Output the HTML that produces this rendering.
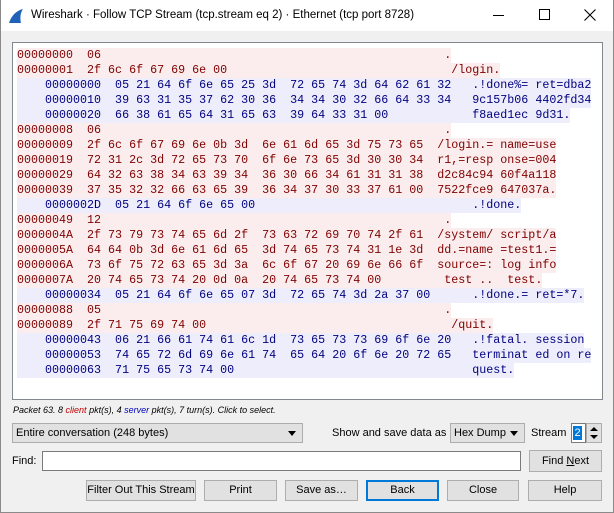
<!DOCTYPE html>
<html><head><meta charset="utf-8"><style>
*{margin:0;padding:0;box-sizing:border-box}
body{width:614px;height:513px;background:#f0f0f0;font-family:"Liberation Sans",sans-serif;font-size:11px;color:#000;position:relative;overflow:hidden;white-space:nowrap}
.frame{position:absolute;left:0;top:0;width:614px;height:513px;border:1px solid #8a8a8a;border-top:none}
.title{position:absolute;left:0;top:0;width:614px;height:31px;background:#fff}
.title .t{position:absolute;left:31px;top:9px;font-size:11.5px}
.ta{position:absolute;left:12px;top:42px;width:591px;height:358px;background:#fff;border:1px solid #828790}
.txt{position:absolute;left:4px;top:5px;font-family:"Liberation Mono",monospace;font-size:11.68px;line-height:15px;white-space:pre}
.c,.s{width:max-content}
.c{color:#7f0000;background:#fbeded}
.s{color:#00007f;background:#ededfb}
.abs{position:absolute}
.btn{position:absolute;height:21px;background:#e1e1e1;border:1px solid #adadad;text-align:center;line-height:19px}
.combo{position:absolute;background:#e1e1e1;border:1px solid #adadad;height:20px;line-height:18px;padding-left:3px}
.arr{position:absolute;right:6px;top:7px;width:0;height:0;border-left:4px solid transparent;border-right:4px solid transparent;border-top:5px solid #000}
</style></head><body>
<div class="title">
<svg class="abs" style="left:8px;top:8px" width="18" height="16" viewBox="0 0 18 16"><path d="M1 15 C3 9 7 3 15 1 C12 5 12 11 13 15 Z" fill="#1f62b8"/></svg>
<div class="t">Wireshark · Follow TCP Stream (tcp.stream eq 2) · Ethernet (tcp port 8728)</div>
<div class="abs" style="left:493px;top:15px;width:11px;height:1px;background:#000"></div>
<div class="abs" style="left:539px;top:9px;width:11px;height:11px;border:1px solid #000"></div>
<svg class="abs" style="left:584px;top:9px" width="12" height="12"><path d="M0.5 0.5L11.5 11.5M11.5 0.5L0.5 11.5" stroke="#000" stroke-width="1.1"/></svg>
</div>
<div class="frame"></div>
<div class="ta"><div class="txt"><div class="c">00000000  06                                                 .</div><div class="c">00000001  2f 6c 6f 67 69 6e 00                                /login.</div><div class="s">    00000000  05 21 64 6f 6e 65 25 3d  72 65 74 3d 64 62 61 32   .!done%= ret=dba2</div><div class="s">    00000010  39 63 31 35 37 62 30 36  34 34 30 32 66 64 33 34   9c157b06 4402fd34</div><div class="s">    00000020  66 38 61 65 64 31 65 63  39 64 33 31 00            f8aed1ec 9d31.</div><div class="c">00000008  06                                                 .</div><div class="c">00000009  2f 6c 6f 67 69 6e 0b 3d  6e 61 6d 65 3d 75 73 65  /login.= name=use</div><div class="c">00000019  72 31 2c 3d 72 65 73 70  6f 6e 73 65 3d 30 30 34  r1,=resp onse=004</div><div class="c">00000029  64 32 63 38 34 63 39 34  36 30 66 34 61 31 31 38  d2c84c94 60f4a118</div><div class="c">00000039  37 35 32 32 66 63 65 39  36 34 37 30 33 37 61 00  7522fce9 647037a.</div><div class="s">    0000002D  05 21 64 6f 6e 65 00                               .!done.</div><div class="c">00000049  12                                                 .</div><div class="c">0000004A  2f 73 79 73 74 65 6d 2f  73 63 72 69 70 74 2f 61  /system/ script/a</div><div class="c">0000005A  64 64 0b 3d 6e 61 6d 65  3d 74 65 73 74 31 1e 3d  dd.=name =test1.=</div><div class="c">0000006A  73 6f 75 72 63 65 3d 3a  6c 6f 67 20 69 6e 66 6f  source=: log info</div><div class="c">0000007A  20 74 65 73 74 20 0d 0a  20 74 65 73 74 00         test ..  test.</div><div class="s">    00000034  05 21 64 6f 6e 65 07 3d  72 65 74 3d 2a 37 00      .!done.= ret=*7.</div><div class="c">00000088  05                                                 .</div><div class="c">00000089  2f 71 75 69 74 00                                   /quit.</div><div class="s">    00000043  06 21 66 61 74 61 6c 1d  73 65 73 73 69 6f 6e 20   .!fatal. session</div><div class="s">    00000053  74 65 72 6d 69 6e 61 74  65 64 20 6f 6e 20 72 65   terminat ed on re</div><div class="s">    00000063  71 75 65 73 74 00                                  quest.</div></div></div>
<div class="abs" style="left:13px;top:405px;font-size:9px;font-style:italic">Packet 63. 8 <span style="color:#c00000">client</span> pkt(s), 4 <span style="color:#0000c0">server</span> pkt(s), 7 turn(s). Click to select.</div>
<div class="combo" style="left:12px;top:423px;width:291px">Entire conversation (248 bytes)<div class="arr"></div></div>
<div class="abs" style="left:332px;top:427px">Show and save data as</div>
<div class="combo" style="left:450px;top:423px;width:75px">Hex Dump<div class="arr"></div></div>
<div class="abs" style="left:531px;top:427px">Stream</div>
<div class="abs" style="left:571px;top:423px;width:15px;height:20px;background:#fff;border:1px solid #7a7a7a"><div style="position:absolute;left:1px;top:2px;width:9px;height:14px;background:#0078d7;color:#fff;line-height:14px;text-align:center">2</div></div>
<div class="abs" style="left:586px;top:423px;width:16px;height:20px;background:#e1e1e1;border:1px solid #adadad"><div class="abs" style="left:3px;top:3px;border-left:4px solid transparent;border-right:4px solid transparent;border-bottom:4px solid #000"></div><div class="abs" style="left:3px;top:11px;border-left:4px solid transparent;border-right:4px solid transparent;border-top:4px solid #000"></div></div>
<div class="abs" style="left:12px;top:455px">Find:</div>
<div class="abs" style="left:42px;top:451px;width:479px;height:20px;background:#fff;border:1px solid #7a7a7a"></div>
<div class="btn" style="left:529px;top:450px;width:73px;height:22px;line-height:20px">Find <u>N</u>ext</div>
<div class="btn" style="left:86px;top:480px;width:110px">Filter Out This Stream</div>
<div class="btn" style="left:204px;top:480px;width:73px">Print</div>
<div class="btn" style="left:285px;top:480px;width:73px">Save as…</div>
<div class="btn" style="left:366px;top:480px;width:73px;border:2px solid #0078d7;line-height:17px">Back</div>
<div class="btn" style="left:447px;top:480px;width:72px">Close</div>
<div class="btn" style="left:528px;top:480px;width:74px">Help</div>
</body></html>
